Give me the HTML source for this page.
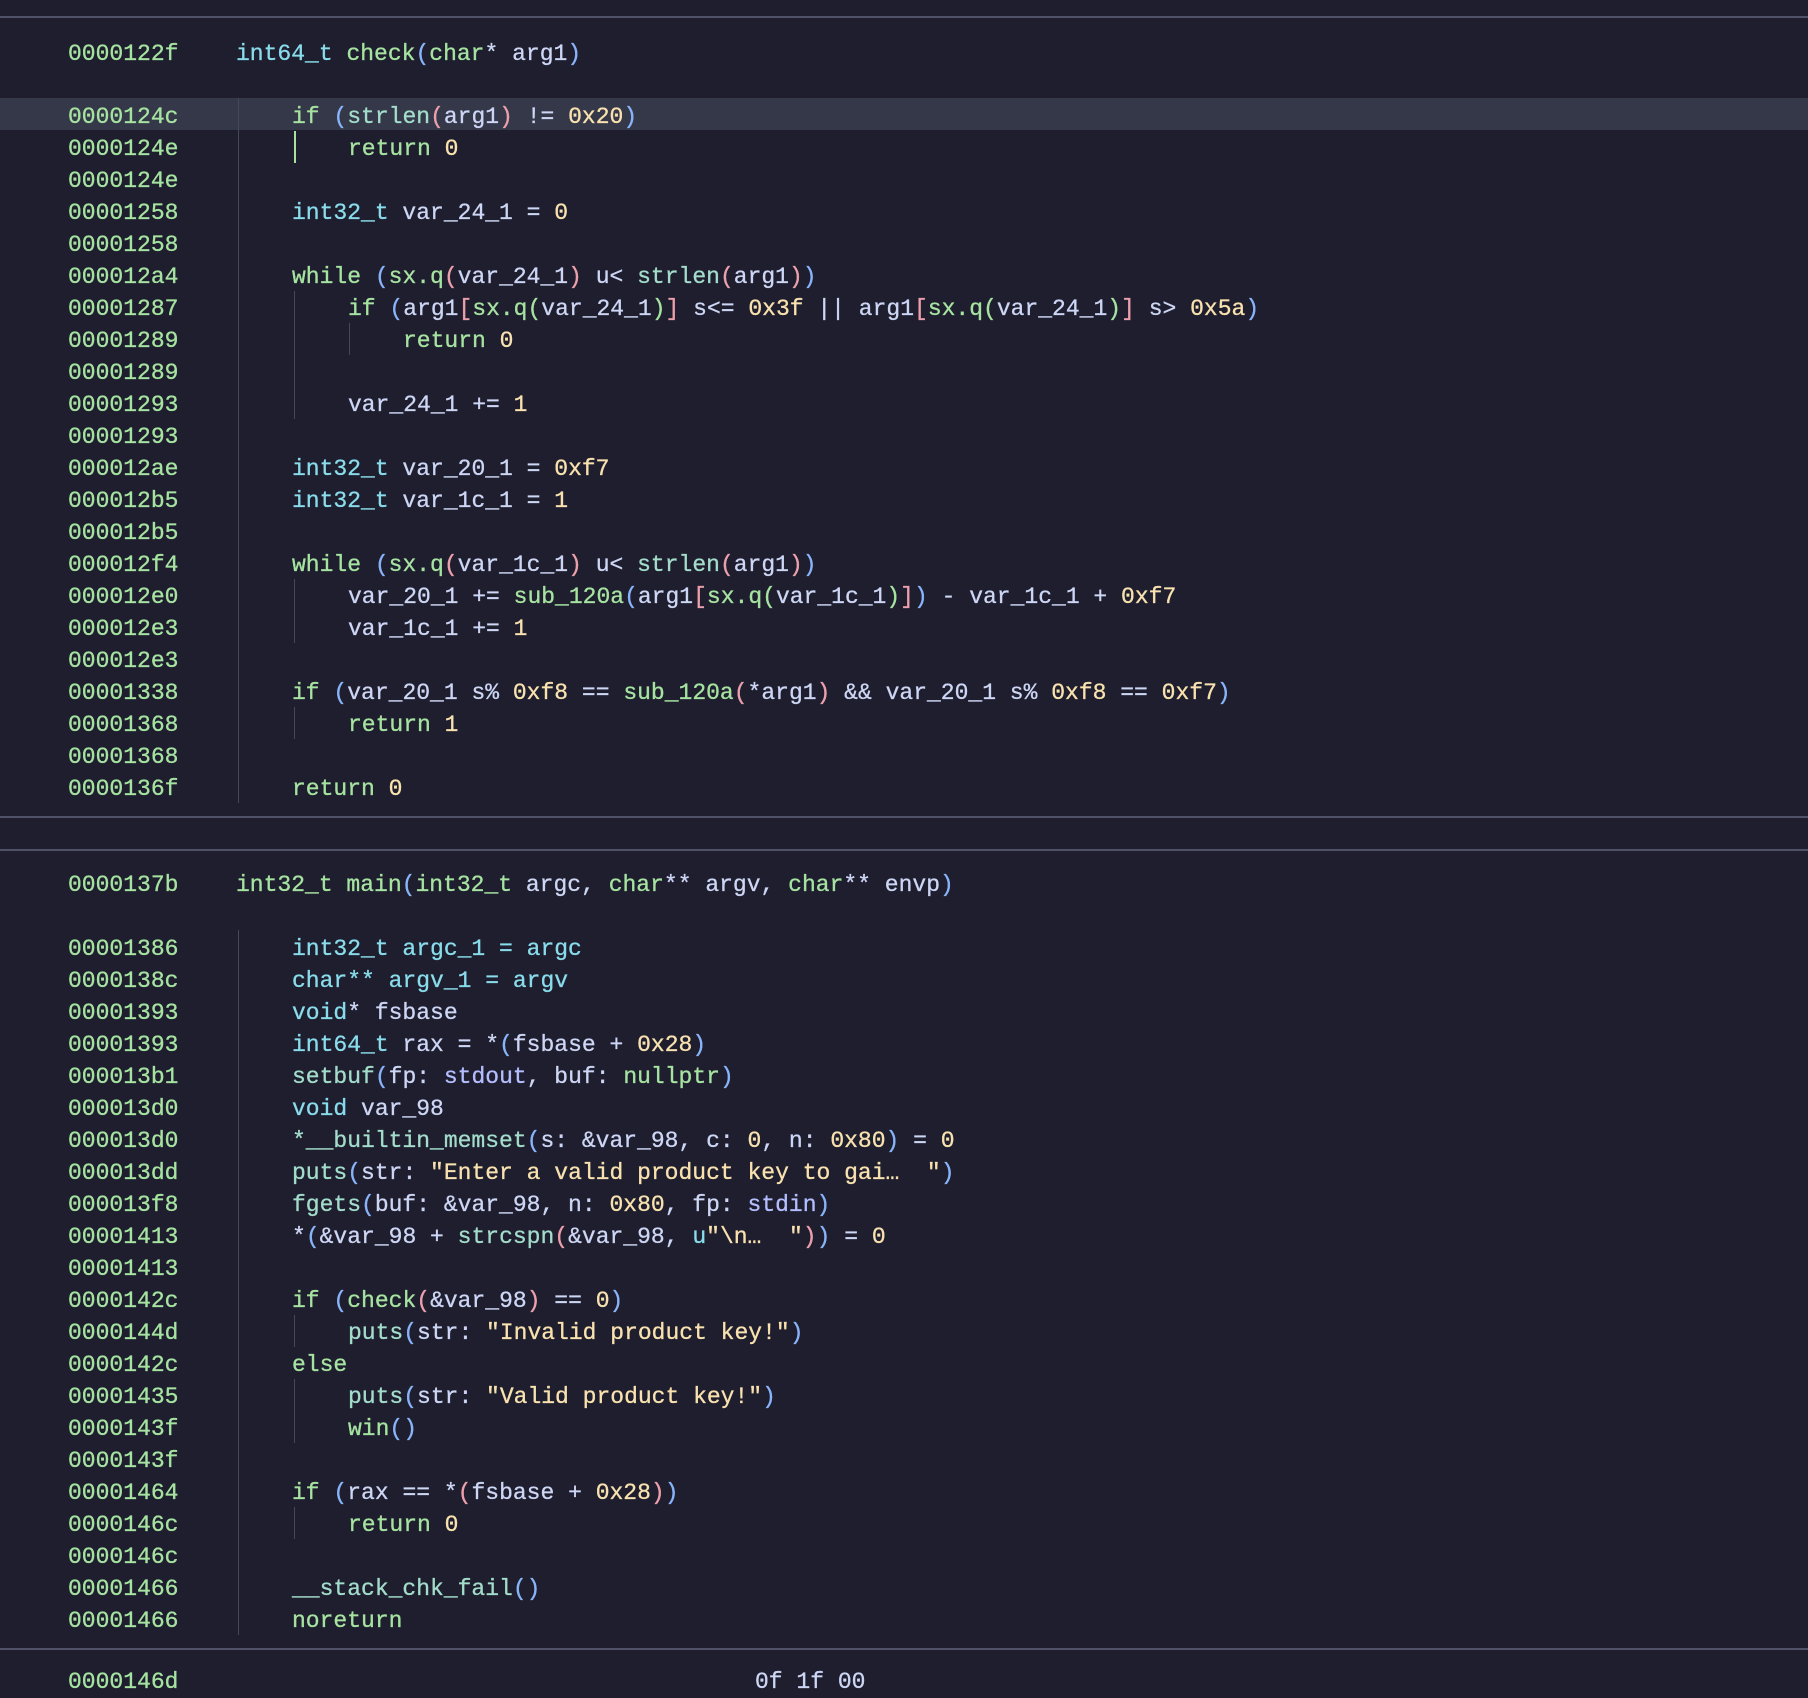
<!DOCTYPE html>
<html><head><meta charset="utf-8"><style>
body{margin:0;width:1808px;height:1678px;background:#1e1e2e;overflow:hidden;position:relative;font-family:"Liberation Mono",monospace;font-size:23px;color:#cdd6f4;-webkit-text-stroke:0.3px}
.r{position:absolute;left:0;width:1808px;height:32px;line-height:32px;white-space:pre;margin-top:2px}
.a{position:absolute;left:68px;color:#a6e3a1}
.c{position:absolute}
.hl{background:#353849;margin-top:0}
.sep{position:absolute;left:0;width:1808px;height:2px;background:#4f5266}
.gd{position:absolute;width:1px;background:#45475a}
.t{color:#89dceb}.g{color:#a6e3a1}.n{color:#f9e2af}.b{color:#89b4fa}.rd{color:#eba0ac}.f{color:#a3dccb}.s{color:#f9e2af}.v{color:#cdd6f4}.l{color:#b4befe}
</style></head><body>
<div class="sep" style="top:16px"></div>
<div class="r" style="top:36px"><span class="a">0000122f</span><span class="c" style="left:236px"><span class="t">int64_t</span> <span class="g">check</span><span class="b">(</span><span class="g">char</span>* arg1<span class="b">)</span></span></div>

<div class="r hl" style="top:98px"></div>
<div class="gd" style="left:238px;top:98px;height:705px"></div>
<div class="gd" style="left:294px;top:131px;height:32px;width:2px;background:#a6e3a1"></div>
<div class="gd" style="left:294px;top:291px;height:128px"></div>
<div class="gd" style="left:349px;top:323px;height:32px"></div>
<div class="gd" style="left:294px;top:579px;height:64px"></div>
<div class="gd" style="left:294px;top:707px;height:32px"></div>

<div class="r" style="top:99px"><span class="a">0000124c</span><span class="c" style="left:292px"><span class="g">if</span> <span class="b">(</span><span class="f">strlen</span><span class="rd">(</span>arg1<span class="rd">)</span> != <span class="n">0x20</span><span class="b">)</span></span></div>
<div class="r" style="top:131px"><span class="a">0000124e</span><span class="c" style="left:348px"><span class="g">return</span> <span class="n">0</span></span></div>
<div class="r" style="top:163px"><span class="a">0000124e</span></div>
<div class="r" style="top:195px"><span class="a">00001258</span><span class="c" style="left:292px"><span class="t">int32_t</span> var_24_1 = <span class="n">0</span></span></div>
<div class="r" style="top:227px"><span class="a">00001258</span></div>
<div class="r" style="top:259px"><span class="a">000012a4</span><span class="c" style="left:292px"><span class="g">while</span> <span class="b">(</span><span class="g">sx.q</span><span class="rd">(</span>var_24_1<span class="rd">)</span> u&lt; <span class="f">strlen</span><span class="rd">(</span>arg1<span class="rd">)</span><span class="b">)</span></span></div>
<div class="r" style="top:291px"><span class="a">00001287</span><span class="c" style="left:348px"><span class="g">if</span> <span class="b">(</span>arg1<span class="rd">[</span><span class="g">sx.q</span><span class="g">(</span>var_24_1<span class="g">)</span><span class="rd">]</span> s&lt;= <span class="n">0x3f</span> || arg1<span class="rd">[</span><span class="g">sx.q</span><span class="g">(</span>var_24_1<span class="g">)</span><span class="rd">]</span> s&gt; <span class="n">0x5a</span><span class="b">)</span></span></div>
<div class="r" style="top:323px"><span class="a">00001289</span><span class="c" style="left:403px"><span class="g">return</span> <span class="n">0</span></span></div>
<div class="r" style="top:355px"><span class="a">00001289</span></div>
<div class="r" style="top:387px"><span class="a">00001293</span><span class="c" style="left:348px">var_24_1 += <span class="n">1</span></span></div>
<div class="r" style="top:419px"><span class="a">00001293</span></div>
<div class="r" style="top:451px"><span class="a">000012ae</span><span class="c" style="left:292px"><span class="t">int32_t</span> var_20_1 = <span class="n">0xf7</span></span></div>
<div class="r" style="top:483px"><span class="a">000012b5</span><span class="c" style="left:292px"><span class="t">int32_t</span> var_1c_1 = <span class="n">1</span></span></div>
<div class="r" style="top:515px"><span class="a">000012b5</span></div>
<div class="r" style="top:547px"><span class="a">000012f4</span><span class="c" style="left:292px"><span class="g">while</span> <span class="b">(</span><span class="g">sx.q</span><span class="rd">(</span>var_1c_1<span class="rd">)</span> u&lt; <span class="f">strlen</span><span class="rd">(</span>arg1<span class="rd">)</span><span class="b">)</span></span></div>
<div class="r" style="top:579px"><span class="a">000012e0</span><span class="c" style="left:348px">var_20_1 += <span class="g">sub_120a</span><span class="b">(</span>arg1<span class="rd">[</span><span class="g">sx.q</span><span class="g">(</span>var_1c_1<span class="g">)</span><span class="rd">]</span><span class="b">)</span> - var_1c_1 + <span class="n">0xf7</span></span></div>
<div class="r" style="top:611px"><span class="a">000012e3</span><span class="c" style="left:348px">var_1c_1 += <span class="n">1</span></span></div>
<div class="r" style="top:643px"><span class="a">000012e3</span></div>
<div class="r" style="top:675px"><span class="a">00001338</span><span class="c" style="left:292px"><span class="g">if</span> <span class="b">(</span>var_20_1 s% <span class="n">0xf8</span> == <span class="g">sub_120a</span><span class="rd">(</span>*arg1<span class="rd">)</span> &amp;&amp; var_20_1 s% <span class="n">0xf8</span> == <span class="n">0xf7</span><span class="b">)</span></span></div>
<div class="r" style="top:707px"><span class="a">00001368</span><span class="c" style="left:348px"><span class="g">return</span> <span class="n">1</span></span></div>
<div class="r" style="top:739px"><span class="a">00001368</span></div>
<div class="r" style="top:771px"><span class="a">0000136f</span><span class="c" style="left:292px"><span class="g">return</span> <span class="n">0</span></span></div>

<div class="sep" style="top:816px"></div>
<div class="sep" style="top:849px"></div>
<div class="r" style="top:867px"><span class="a">0000137b</span><span class="c" style="left:236px"><span class="g">int32_t main</span><span class="b">(</span><span class="g">int32_t</span> argc, <span class="g">char</span>** argv, <span class="g">char</span>** envp<span class="b">)</span></span></div>

<div class="gd" style="left:238px;top:930px;height:705px"></div>
<div class="gd" style="left:294px;top:1315px;height:32px"></div>
<div class="gd" style="left:294px;top:1379px;height:64px"></div>
<div class="gd" style="left:294px;top:1507px;height:32px"></div>

<div class="r" style="top:931px"><span class="a">00001386</span><span class="c t" style="left:292px">int32_t argc_1 = argc</span></div>
<div class="r" style="top:963px"><span class="a">0000138c</span><span class="c t" style="left:292px">char** argv_1 = argv</span></div>
<div class="r" style="top:995px"><span class="a">00001393</span><span class="c" style="left:292px"><span class="t">void</span>* fsbase</span></div>
<div class="r" style="top:1027px"><span class="a">00001393</span><span class="c" style="left:292px"><span class="t">int64_t</span> rax = *<span class="b">(</span>fsbase + <span class="n">0x28</span><span class="b">)</span></span></div>
<div class="r" style="top:1059px"><span class="a">000013b1</span><span class="c" style="left:292px"><span class="f">setbuf</span><span class="b">(</span>fp: <span class="l">stdout</span>, buf: <span class="g">nullptr</span><span class="b">)</span></span></div>
<div class="r" style="top:1091px"><span class="a">000013d0</span><span class="c" style="left:292px"><span class="t">void</span> var_98</span></div>
<div class="r" style="top:1123px"><span class="a">000013d0</span><span class="c" style="left:292px"><span class="f">*__builtin_memset</span><span class="b">(</span>s: &amp;var_98, c: <span class="n">0</span>, n: <span class="n">0x80</span><span class="b">)</span> = <span class="n">0</span></span></div>
<div class="r" style="top:1155px"><span class="a">000013dd</span><span class="c" style="left:292px"><span class="f">puts</span><span class="b">(</span>str: <span class="s">"Enter a valid product key to gai…  "</span><span class="b">)</span></span></div>
<div class="r" style="top:1187px"><span class="a">000013f8</span><span class="c" style="left:292px"><span class="f">fgets</span><span class="b">(</span>buf: &amp;var_98, n: <span class="n">0x80</span>, fp: <span class="l">stdin</span><span class="b">)</span></span></div>
<div class="r" style="top:1219px"><span class="a">00001413</span><span class="c" style="left:292px">*<span class="b">(</span>&amp;var_98 + <span class="f">strcspn</span><span class="rd">(</span>&amp;var_98, <span class="t">u</span><span class="s">"\n…  "</span><span class="rd">)</span><span class="b">)</span> = <span class="n">0</span></span></div>
<div class="r" style="top:1251px"><span class="a">00001413</span></div>
<div class="r" style="top:1283px"><span class="a">0000142c</span><span class="c" style="left:292px"><span class="g">if</span> <span class="b">(</span><span class="g">check</span><span class="rd">(</span>&amp;var_98<span class="rd">)</span> == <span class="n">0</span><span class="b">)</span></span></div>
<div class="r" style="top:1315px"><span class="a">0000144d</span><span class="c" style="left:348px"><span class="f">puts</span><span class="b">(</span>str: <span class="s">"Invalid product key!"</span><span class="b">)</span></span></div>
<div class="r" style="top:1347px"><span class="a">0000142c</span><span class="c g" style="left:292px">else</span></div>
<div class="r" style="top:1379px"><span class="a">00001435</span><span class="c" style="left:348px"><span class="f">puts</span><span class="b">(</span>str: <span class="s">"Valid product key!"</span><span class="b">)</span></span></div>
<div class="r" style="top:1411px"><span class="a">0000143f</span><span class="c" style="left:348px"><span class="g">win</span><span class="b">()</span></span></div>
<div class="r" style="top:1443px"><span class="a">0000143f</span></div>
<div class="r" style="top:1475px"><span class="a">00001464</span><span class="c" style="left:292px"><span class="g">if</span> <span class="b">(</span>rax == *<span class="rd">(</span>fsbase + <span class="n">0x28</span><span class="rd">)</span><span class="b">)</span></span></div>
<div class="r" style="top:1507px"><span class="a">0000146c</span><span class="c" style="left:348px"><span class="g">return</span> <span class="n">0</span></span></div>
<div class="r" style="top:1539px"><span class="a">0000146c</span></div>
<div class="r" style="top:1571px"><span class="a">00001466</span><span class="c" style="left:292px"><span class="f">__stack_chk_fail</span><span class="b">()</span></span></div>
<div class="r" style="top:1603px"><span class="a">00001466</span><span class="c g" style="left:292px">noreturn</span></div>

<div class="sep" style="top:1648px"></div>
<div class="r" style="top:1664px"><span class="a">0000146d</span><span class="c" style="left:755px">0f 1f 00</span></div>
</body></html>
